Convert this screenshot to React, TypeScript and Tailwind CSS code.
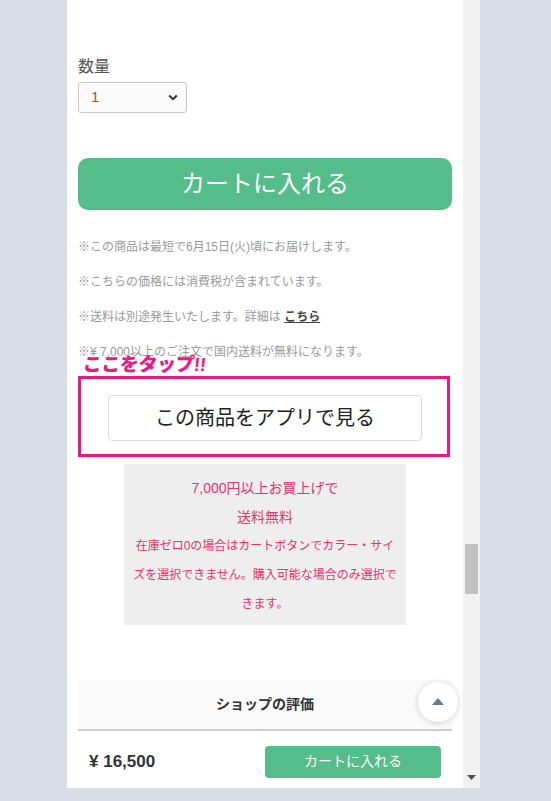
import React from "react";

export default function App() {
  const notes = [
    "※この商品は最短で6月15日(火)頃にお届けします。",
    "※こちらの価格には消費税が含まれています。",
  ];
  return (
    <div className="flex h-[801px] w-[551px] bg-[#d9dde6] font-['Liberation_Sans','Noto_Sans_CJK_JP',sans-serif] overflow-hidden">
      <div className="w-[67px] shrink-0" />
      <div className="flex h-[788px] w-[396px] shrink-0 flex-col bg-white">
        <div className="relative flex-1 overflow-hidden px-[11px]">
          <div className="mt-[55px] text-[16px] leading-6 text-[#555]">数量</div>
          <div className="mt-[3px] flex h-[31px] w-[109px] items-center justify-between rounded-[3px] border border-[#c8c8c8] bg-[#fbfbfb] pl-3 pr-[8px]">
            <span className="text-[15px] text-[#9a5a20]">1</span>
            <svg width="10" height="7" viewBox="0 0 10 7">
              <path d="M1.2 1.5 L5 5.2 L8.8 1.5" fill="none" stroke="#333" strokeWidth="2" />
            </svg>
          </div>
          <div className="mt-[45px] flex h-[52px] items-center justify-center rounded-[10px] bg-[#55bd8a] text-[24px] text-white">
            カートに入れる
          </div>
          <div className="mt-[29px] flex flex-col gap-[18px] text-[12px] leading-[17px] text-[#999]">
            {notes.map((n) => (
              <div key={n}>{n}</div>
            ))}
            <div>
              ※送料は別途発生いたします。詳細は{" "}
              <span className="font-bold text-[#444] underline">こちら</span>
            </div>
            <div>※¥ 7,000以上のご注文で国内送料が無料になります。</div>
          </div>
          <div className="relative mt-[15px] w-[372px] border-[3px] border-[#e8197f] pb-[13px] pt-[16px]">
            <div className="absolute left-[2px] top-[-26px] -skew-x-6 text-[19px] font-black leading-6 tracking-[-0.5px] text-[#ec1a80]">
              ここをタップ!!
            </div>
            <div className="ml-[27px] flex h-[46px] w-[314px] items-center justify-center rounded-[4px] border border-[#dcdcdc] bg-white text-[20px] text-[#222]">
              この商品をアプリで見る
            </div>
          </div>
          <div className="mx-auto mt-[7px] w-[282px] bg-[#eeeeee] pb-[6px] pt-[10px] text-center text-[12px] leading-[29px] text-[#e8336f]">
            <div className="text-[14px]">7,000円以上お買上げで</div>
            <div className="text-[14px]">送料無料</div>
            <div className="whitespace-nowrap">在庫ゼロ0の場合はカートボタンでカラー・サイ</div>
            <div className="whitespace-nowrap">ズを選択できません。購入可能な場合のみ選択で</div>
            <div className="whitespace-nowrap">きます。</div>
          </div>
          <div className="mt-[55px] flex h-[51px] items-center justify-center border-b-2 border-[#cccccc] bg-[#fafafa] text-[14px] font-bold text-[#333]">
            ショップの評価
          </div>
          <div className="absolute left-[351px] top-[682px] flex h-[40px] w-[40px] items-center justify-center rounded-full bg-white shadow-[0_1px_6px_rgba(0,0,0,0.18)]">
            <svg width="12" height="8" viewBox="0 0 12 8">
              <path d="M6 0 L12 7 L0 7 Z" fill="#6b7b83" />
            </svg>
          </div>
        </div>
        <div className="flex h-[53px] shrink-0 items-center justify-between bg-white pl-[22px] pr-[22px]">
          <span className="text-[17px] font-bold text-[#333]">¥ 16,500</span>
          <div className="flex h-[32px] w-[176px] items-center justify-center rounded-[4px] bg-[#55bd8a] text-[14px] text-white">
            カートに入れる
          </div>
        </div>
      </div>
      <div className="relative h-[788px] w-[17px] shrink-0 bg-[#f1f1f1]">
        <div className="absolute left-[2px] top-[544px] h-[50px] w-[13px] bg-[#c1c1c1]" />
        <svg className="absolute left-[4px] top-[775px]" width="9" height="5" viewBox="0 0 9 5">
          <path d="M0 0 L9 0 L4.5 5 Z" fill="#505050" />
        </svg>
      </div>
      <div className="flex-1" />
    </div>
  );
}
